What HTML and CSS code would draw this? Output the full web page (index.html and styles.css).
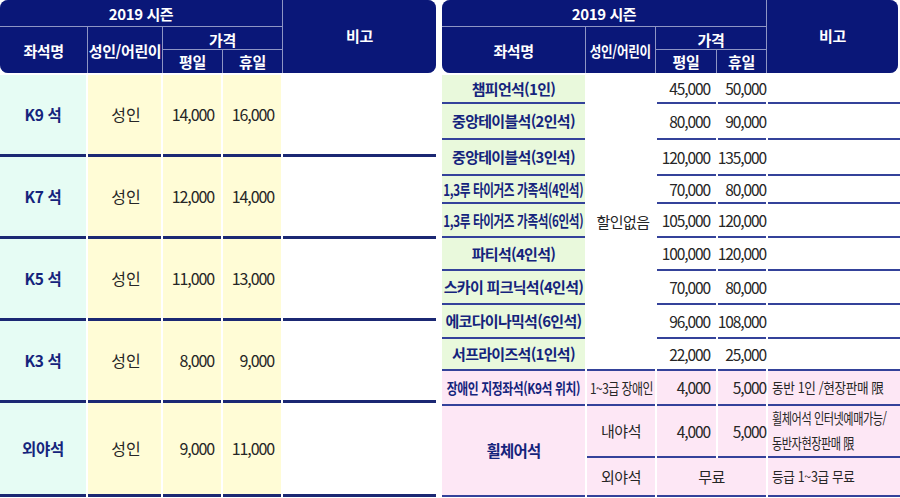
FILE: index.html
```html
<!DOCTYPE html>
<html lang="ko">
<head>
<meta charset="utf-8">
<title>2019 시즌 좌석 가격</title>
<link rel="stylesheet" href="styles.css">
</head>
<body>
<div class="page">
  <div class="tbl tbl-left">
    <div class="head">
      <div class="h season">2019 시즌</div>
      <div class="h note">비고</div>
      <div class="h seat">좌석명</div>
      <div class="h age">성인/어린이</div>
      <div class="h price">가격</div>
      <div class="h wk">평일</div>
      <div class="h hd">휴일</div>
    </div>
    <div class="body">
      <div class="c name mint">K9 석</div><div class="c yel txt">성인</div><div class="c yel num">14,000</div><div class="c yel num">16,000</div><div class="c"></div>
      <div class="c name mint">K7 석</div><div class="c yel txt">성인</div><div class="c yel num">12,000</div><div class="c yel num">14,000</div><div class="c"></div>
      <div class="c name mint">K5 석</div><div class="c yel txt">성인</div><div class="c yel num">11,000</div><div class="c yel num">13,000</div><div class="c"></div>
      <div class="c name mint">K3 석</div><div class="c yel txt">성인</div><div class="c yel num">8,000</div><div class="c yel num">9,000</div><div class="c"></div>
      <div class="c name mint">외야석</div><div class="c yel txt">성인</div><div class="c yel num">9,000</div><div class="c yel num">11,000</div><div class="c"></div>
    </div>
  </div>

  <div class="tbl tbl-right">
    <div class="head">
      <div class="h season">2019 시즌</div>
      <div class="h note">비고</div>
      <div class="h seat">좌석명</div>
      <div class="h age"><span class="sx sx-age">성인/어린이</span></div>
      <div class="h price">가격</div>
      <div class="h wk">평일</div>
      <div class="h hd">휴일</div>
    </div>
    <div class="body">
      <div class="c name green">챔피언석(1인)</div>
      <div class="c txt nodisc">할인없음</div>
      <div class="c num n3">45,000</div><div class="c num n4">50,000</div><div class="c"></div>

      <div class="c name green">중앙테이블석(2인석)</div>
      <div class="c num n3">80,000</div><div class="c num n4">90,000</div><div class="c"></div>

      <div class="c name green">중앙테이블석(3인석)</div>
      <div class="c num n3">120,000</div><div class="c num n4">135,000</div><div class="c"></div>

      <div class="c name green"><span class="sx sx-fam">1,3루 타이거즈 가족석(4인석)</span></div>
      <div class="c num n3">70,000</div><div class="c num n4">80,000</div><div class="c"></div>

      <div class="c name green"><span class="sx sx-fam">1,3루 타이거즈 가족석(6인석)</span></div>
      <div class="c num n3">105,000</div><div class="c num n4">120,000</div><div class="c"></div>

      <div class="c name green">파티석(4인석)</div>
      <div class="c num n3">100,000</div><div class="c num n4">120,000</div><div class="c"></div>

      <div class="c name green">스카이 피크닉석(4인석)</div>
      <div class="c num n3">70,000</div><div class="c num n4">80,000</div><div class="c"></div>

      <div class="c name green">에코다이나믹석(6인석)</div>
      <div class="c num n3">96,000</div><div class="c num n4">108,000</div><div class="c"></div>

      <div class="c name green">서프라이즈석(1인석)</div>
      <div class="c num n3">22,000</div><div class="c num n4">25,000</div><div class="c"></div>

      <div class="c name pink"><span class="sx sx-dis">장애인 지정좌석(K9석 위치)</span></div>
      <div class="c txt pink"><span class="sx sx-grade">1~3급 장애인</span></div>
      <div class="c num n3 pink">4,000</div><div class="c num n4 pink">5,000</div>
      <div class="c memo pink"><span class="sx-left sx-memo1">동반 1인 /현장판매 限</span></div>

      <div class="c name pink wheel">휠체어석</div>
      <div class="c txt pink">내야석</div>
      <div class="c num n3 pink">4,000</div><div class="c num n4 pink">5,000</div>
      <div class="c memo pink"><span class="sx-left sx-memo2">휠체어석 인터넷예매가능/<br>동반자현장판매 限</span></div>

      <div class="c txt pink">외야석</div>
      <div class="c txt pink free">무료</div>
      <div class="c memo pink"><span class="sx-left sx-memo1">등급 1~3급 무료</span></div>
    </div>
  </div>
</div>
</body>
</html>
```

FILE: styles.css
```css
* {
  box-sizing: border-box;
  margin: 0;
  padding: 0;
}

html, body {
  background: #ffffff;
}

body {
  width: 900px;
  height: 498px;
  overflow: hidden;
  font-family: "Noto Sans CJK KR", "Noto Sans", sans-serif;
  color: #262626;
}

.page {
  display: flex;
  gap: 6px;
}

.tbl-left {
  width: 436px;
}

.tbl-right {
  width: 456px;
}

/* header */
.head {
  display: grid;
  grid-template-rows: 26px 22px 23px;
  gap: 1px;
  height: 73px;
  background: #8e95c4;
  border-radius: 8px;
  overflow: hidden;
}

.tbl-left .head {
  grid-template-columns: 87px 74px 59px 59px 1fr;
}

.tbl-right .head {
  grid-template-columns: 143px 69px 60px 49px 1fr;
}

.h {
  background: #0a1778;
  color: #ffffff;
  font-weight: 700;
  font-size: 15px;
  line-height: 1;
  display: flex;
  align-items: center;
  justify-content: center;
  letter-spacing: -0.4px;
  white-space: nowrap;
}

.season { grid-column: 1 / 5; grid-row: 1; }
.note   { grid-column: 5; grid-row: 1 / 4; padding-bottom: 3px; }
.seat   { grid-column: 1; grid-row: 2 / 4; }
.age    { grid-column: 2; grid-row: 2 / 4; }
.price  { grid-column: 3 / 5; grid-row: 2; padding-top: 2px; }
.wk     { grid-column: 3; grid-row: 3; }
.hd     { grid-column: 4; grid-row: 3; }

/* horizontally condensed text */
.sx {
  display: inline-block;
  flex: none;
  transform-origin: center center;
}

.sx-left {
  display: inline-block;
  flex: none;
  transform-origin: left center;
}

.sx-age {
  transform: scaleX(0.84);
}

.sx-fam {
  font-size: 15.5px;
  letter-spacing: -0.5px;
  transform: scaleX(0.75);
}

.sx-dis {
  font-size: 15px;
  letter-spacing: -0.5px;
  transform: scaleX(0.79);
}

.sx-grade {
  font-size: 14.5px;
  letter-spacing: -0.6px;
  transform: scaleX(0.82);
}

.sx-memo1 {
  font-size: 14px;
  letter-spacing: -0.4px;
  transform: scaleX(0.9);
}

.sx-memo2 {
  font-size: 14.5px;
  letter-spacing: -0.6px;
  line-height: 25px;
  padding-bottom: 2px;
  transform: scaleX(0.77);
}

/* body */
.body {
  display: grid;
  column-gap: 2px;
  margin-top: 2px;
}

.tbl-left .body {
  grid-template-columns: 86px 73px 58px 58px 1fr;
  grid-template-rows: 82px 82px 82px 82px 94px;
}

.tbl-right .body {
  grid-template-columns: 143px 68px 59px 48px 1fr;
  grid-template-rows: 29px 36px 36px 28px 34px 33px 34px 34px 32px 35px 52px 39px;
}

.c {
  display: flex;
  align-items: center;
  justify-content: center;
  line-height: 1.2;
  white-space: nowrap;
}

.tbl-left .c {
  border-bottom: 3px solid #1b2873;
}

.tbl-right .c {
  border-bottom: 2px solid #34429a;
}

.mint { background: #e6fcf4; }
.yel { background: #fffcd6; }
.green { background: #e9f9dc; }
.pink { background: #fde7f5; }

.name {
  color: #15247c;
  font-weight: 700;
}

.tbl-left .name {
  font-size: 15.5px;
  letter-spacing: -0.3px;
}

.tbl-left .txt {
  font-size: 16px;
  padding-left: 3px;
}

.tbl-left .num {
  justify-content: flex-end;
  padding-right: 7px;
  font-size: 16px;
  letter-spacing: -1.1px;
}

.tbl-right .name {
  font-size: 15px;
  letter-spacing: -0.7px;
}

.tbl-right .name.wheel {
  grid-row: span 2;
  font-size: 15.5px;
}

.nodisc {
  grid-row: span 9;
  padding-left: 4px;
}

.tbl-right .txt {
  font-size: 15px;
  letter-spacing: -0.5px;
}

.free {
  grid-column: span 2;
}

.tbl-right .num {
  justify-content: flex-end;
  font-size: 15.5px;
  letter-spacing: -1.1px;
}

.tbl-right .num.n3 {
  padding-right: 6px;
}

.tbl-right .num.n4 {
  padding-right: 0;
}

.memo {
  justify-content: flex-start;
  padding-left: 4px;
}
```
